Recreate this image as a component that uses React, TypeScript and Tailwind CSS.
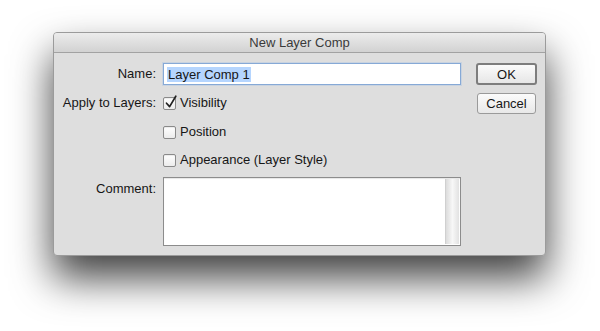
import React from 'react';

const Checkbox: React.FC<{ checked?: boolean }> = ({ checked }) => (
  <div className="relative w-[13px] h-[13px] shrink-0 rounded-[2px] border border-[#8a8a8a] bg-gradient-to-b from-[#ffffff] to-[#ececec] shadow-[inset_0_1px_1px_rgba(0,0,0,0.08)]">
    {checked && (
      <svg className="absolute -top-[3px] left-[1px]" width="12" height="14" viewBox="0 0 12 14">
        <path d="M1.5 8.2 L4.6 11.6 L10.8 1.2" fill="none" stroke="#222" strokeWidth="1.7" strokeLinecap="round" strokeLinejoin="round" />
      </svg>
    )}
  </div>
);

const Row: React.FC<{ label?: string; className?: string; children: React.ReactNode }> = ({ label, className, children }) => (
  <div className={`flex items-center ${className ?? ''}`}>
    <div className="w-[103px] shrink-0 pr-[1px] text-right">{label}</div>
    <div className="ml-[6px] flex items-center">{children}</div>
  </div>
);

export default function App() {
  return (
    <div
      className="w-[600px] h-[331px] bg-white pt-[32px] pl-[53px] overflow-hidden"
      style={{ fontFamily: '"Liberation Sans", Arial, sans-serif' }}
    >
      <div className="w-[493px] h-[224px] rounded-[4px] border border-[#9b9b9b] bg-[#dedede] shadow-[0_22px_40px_rgba(0,0,0,0.75)] overflow-hidden text-[13px] text-[#161616]">
        {/* Title bar */}
        <div className="h-[20px] border-b border-[#a2a2a2] bg-gradient-to-b from-[#ececec] to-[#d2d2d2] flex items-center justify-center text-[13px] text-[#3a3a3a] leading-none">
          New Layer Comp
        </div>

        <div className="flex pt-[10px]">
          {/* Left: fields */}
          <div className="flex flex-col">
            <Row label="Name:" className="h-[22px]">
              <div className="w-[298px] h-[22px] border border-[#86a9d6] bg-white flex items-center pl-[3px] shadow-[0_0_0_1px_rgba(140,180,230,0.25)]">
                <span className="bg-[#b5d5fe] px-[1px] leading-[15px]">Layer Comp 1</span>
              </div>
            </Row>

            <Row label="Apply to Layers:" className="h-[20px] mt-[8px]">
              <Checkbox checked />
              <span className="ml-[4px]">Visibility</span>
            </Row>

            <Row className="h-[20px] mt-[9px]">
              <Checkbox />
              <span className="ml-[4px]">Position</span>
            </Row>

            <Row className="h-[20px] mt-[8px]">
              <Checkbox />
              <span className="ml-[4px]">Appearance (Layer Style)</span>
            </Row>

            <div className="flex mt-[7px]">
              <div className="w-[103px] shrink-0 pr-[1px] pt-[2px] text-right">Comment:</div>
              <div className="ml-[6px] w-[298px] h-[69px] border border-[#8c8c8c] bg-white flex justify-end p-[1px] shadow-[inset_0_1px_1px_rgba(0,0,0,0.1)]">
                <div className="w-[14px] h-full bg-gradient-to-r from-[#dcdcdc] via-[#f7f7f7] to-[#e2e2e2] border-l border-[#d0d0d0]" />
              </div>
            </div>
          </div>

          {/* Right: buttons */}
          <div className="ml-[15px] flex flex-col items-start">
            <button className="w-[61px] h-[22px] rounded-[3px] border-2 border-[#7d7d7d] bg-gradient-to-b from-[#fbfbfb] to-[#e6e6e6] text-[13px] text-[#161616] leading-none">
              OK
            </button>
            <button className="mt-[8px] ml-[1px] w-[59px] h-[21px] rounded-[3px] border border-[#9a9a9a] bg-gradient-to-b from-[#fbfbfb] to-[#e8e8e8] text-[13px] text-[#161616] leading-none">
              Cancel
            </button>
          </div>
        </div>
      </div>
    </div>
  );
}
